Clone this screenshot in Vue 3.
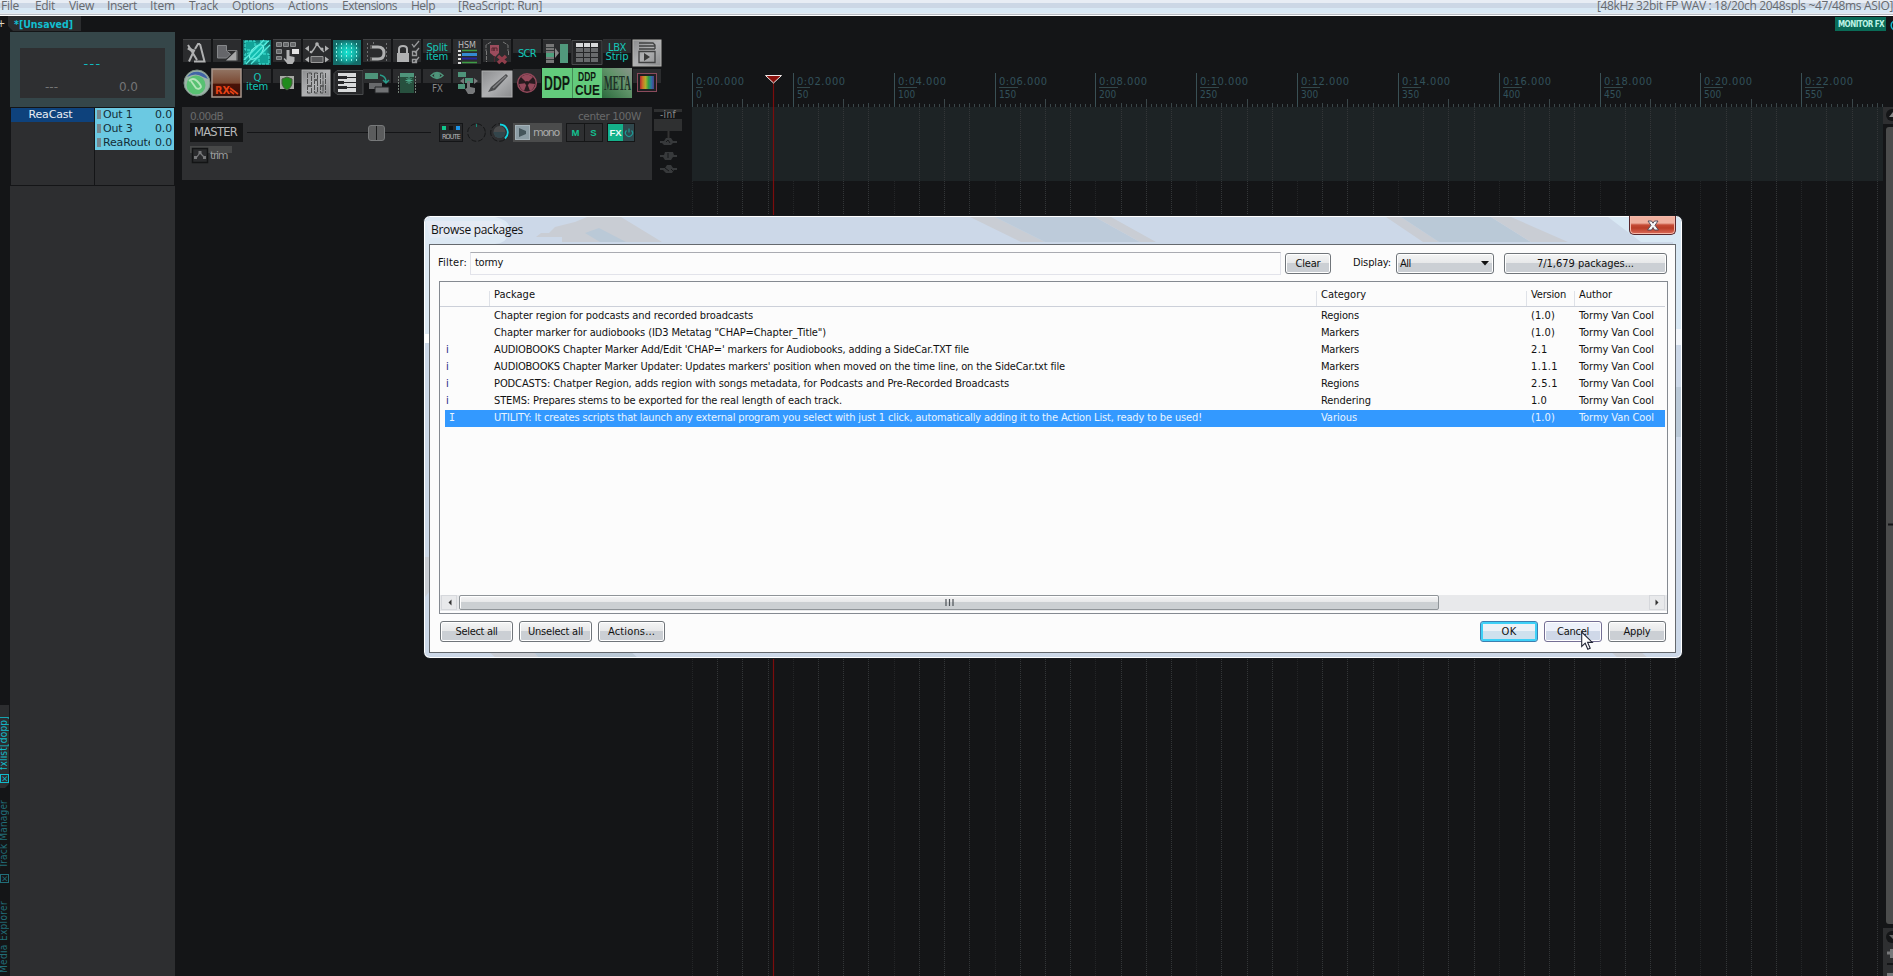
<script setup>
// Spreads a label to a fixed advance width by adjusting its tracking.
const vFit = {
  mounted(el, { value }) {
    if (!value) return
    const box = el.getBoundingClientRect()
    const size = Math.max(box.width, box.height)
    const count = el.textContent.length
    if (count) el.style.letterSpacing = (value - size) / count + 'px'
  },
}

const menus = [
  ['File', 18, 16], ['Edit', 20, 14], ['View', 25, 13], ['Insert', 30, 13], ['Item', 25, 14],
  ['Track', 29, 14], ['Options', 42, 14], ['Actions', 40, 14], ['Extensions', 55, 14], ['Help', 24, 23],
  ['[ReaScript: Run]', 84, 0],
]

const sends = ['Out 1', 'Out 3', 'ReaRoute']

const STEP = 100.84
const majors = Array.from({ length: 12 }, (_, i) => ({
  x: Math.round(i * STEP),
  time: '0:' + String(i * 2).padStart(2, '0') + '.000',
  frame: String(i * 50),
}))
const ticks = []
for (let i = 1; i < 237; i++) {
  const m = i % 20
  if (m === 0) continue
  ticks.push({ x: Math.round((i * STEP) / 20), y: m === 10 ? 26 : m % 5 === 0 ? 30 : 31 })
}
const grid = []
for (let i = 0; i < 48; i++) grid.push({ x: Math.round((i * STEP) / 4), major: i % 4 === 0 })

const rows = [
  ['', 'Chapter region for podcasts and recorded broadcasts', 259, 'Regions', 38, '(1.0)', 24],
  ['', 'Chapter marker for audiobooks (ID3 Metatag "CHAP=Chapter_Title")', 332, 'Markers', 38, '(1.0)', 24],
  ['i', "AUDIOBOOKS Chapter Marker Add/Edit 'CHAP=' markers for Audiobooks, adding a SideCar.TXT file", 475, 'Markers', 38, '2.1', 17],
  ['i', "AUDIOBOOKS Chapter Marker Updater: Updates markers' position when moved on the time line, on the SideCar.txt file", 571, 'Markers', 38, '1.1.1', 27],
  ['i', 'PODCASTS: Chatper Region, adds region with songs metadata, for Podcasts and Pre-Recorded Broadcasts', 515, 'Regions', 38, '2.5.1', 27],
  ['i', 'STEMS: Prepares stems to be exported for the real length of each track.', 348, 'Rendering', 50, '1.0', 16],
  ['I', 'UTILITY: It creates scripts that launch any external program you select with just 1 click, automatically adding it to the Action List, ready to be used!', 708, 'Various', 36, '(1.0)', 24],
]
</script>

<template>
  <div class="screen">
    <header class="menubar">
      <span v-for="m in menus" :key="m[0]" v-fit="m[1]" :style="{ marginRight: m[2] + 'px' }">{{ m[0] }}</span>
      <span v-fit="296" class="audio">[48kHz 32bit FP WAV : 18/20ch 2048spls ~47/48ms ASIO]</span>
    </header>

    <div class="body">
      <aside class="left">
        <div class="projects"><span class="plus">+</span><span class="ptab"><b v-fit="59">*[Unsaved]</b></span></div>
        <div class="dockrow">
          <nav class="rail">
            <div class="vtab on"><span v-fit="54">fxlist[dopp]</span><i>×</i></div>
            <div class="vtab tm"><span v-fit="68">Track Manager</span><i>×</i></div>
            <div class="vtab me"><span v-fit="72">Media Explorer</span></div>
          </nav>
          <div class="dock">
            <div class="transport">
              <div class="display"><span class="t1">---</span><div class="t2"><span>---</span><span>0.0</span></div></div>
            </div>
            <div class="strips">
              <div class="strip"><div class="sname"><span v-fit="44">ReaCast</span></div></div>
              <div class="strip sends">
                <div v-for="s in sends" :key="s" class="send"><i></i><span class="sn">{{ s }}</span><span v-fit="17">0.0</span></div>
              </div>
            </div>
            <div class="empty"></div>
          </div>
        </div>
      </aside>

      <main class="center">
        <div class="toolbar">
          <svg class="cell"><rect class="bt" width="28" height="23" /><path d="M0 .5h28" class="edge" /><path d="M5 6l9 15M6 22.500l5.500-12M17 5l4.500 17.500H11M17 5l-2 0-3 5" fill="none" stroke="#b0b1b2" stroke-width="2" /><path d="M5 9l5 3" stroke="#b0b1b2" stroke-width="3" /></svg>
          <svg class="cell"><rect class="bt" width="28" height="23" /><path d="M0 .5h28" class="edge" /><path d="M4.500 6.500h9V12l4 3-4 4h-9z" fill="#65666a" stroke="#85878a" /><path d="M13 21.500L23.500 11.500v10z" fill="#a6a7a8" /><path d="M14.500 11.500h9.500v10" fill="none" stroke="#7d7e80" /></svg>
          <svg class="cell"><defs><radialGradient id="teal"><stop offset="0" stop-color="#14e6d3" /><stop offset=".6" stop-color="#14aca1" /><stop offset="1" stop-color="#146c69" /></radialGradient></defs><rect y="1" width="28" height="25" fill="url(#teal)" /><path d="M2 2h10v9H2zM17 2h9L15 13M2 25V15l8-2M16 15h10v10H16z" fill="#12a398" stroke="#45e5d6" stroke-dasharray="3 1" /><ellipse cx="13.500" cy="13" rx="9" ry="4.500" transform="rotate(-47 13.500 13)" fill="#13bdb0" stroke="#83f3e7" /><path d="M3 25L25 2M1 21L21 1M8 25L27 6" stroke="#55e9dc" stroke-width="1.300" /></svg>
          <svg class="cell"><rect class="bt" width="28" height="23" /><path d="M0 .5h28" class="edge" /><path d="M3.500 3.500h5v4h-5zM10.500 3.500h5v4h-5zM17.500 3.500h5v4h-5zM3.500 10.500h5v4h-5zM3.500 17.500h5v3h-5z" fill="#66686a" stroke="#8d8f90" /><path d="M19 10h7v5h-7z" fill="#e3e3e3" /><path d="M13.500 11h3v6l5 1v4l-2 3h-5l-4-5 1-1 2 2z" fill="#b1b2b3" /></svg>
          <svg class="cell"><rect class="bt" width="28" height="23" /><path d="M0 .5h28" class="edge" /><path d="M2 9.500l4-3v6zM26 9.500l-4-3v6zM2 20.500l4-3v6zM26 20.500l-4-3v6z" fill="#b0b1b2" /><path d="M8 14l3-4 3-5 4 5 3 3" fill="none" stroke="#b0b1b2" stroke-width="1.400" /><circle cx="8" cy="13" r="1.300" class="ico" /><circle cx="14" cy="5" r="1.800" class="ico" /><circle cx="19" cy="10" r="1.500" class="ico" /><path d="M8 17.500h12v6H8z" fill="#565759" stroke="#999" /></svg>
          <svg class="cell"><rect y="1" width="28" height="25" fill="url(#teal)" /><path d="M3.500 4v20M8.500 4v20M13.500 4v20M18.500 4v20M23.500 4v20" stroke="#8feee4" stroke-dasharray="2 2" /></svg>
          <svg class="cell"><rect class="bt" width="28" height="23" /><path d="M0 .5h28" class="edge" /><path d="M4.500 4v19M23.500 4v19M10.500 3v3" stroke="#707173" stroke-dasharray="2 2" /><path d="M8 8h7q6 0 6 6t-6 6H8" fill="none" stroke="#b0b1b2" stroke-width="3" /><path d="M8 6v4M8 18v4" stroke="#555" stroke-width="2" /></svg>
          <svg class="cell"><rect class="bt" width="28" height="23" /><path d="M0 .5h28" class="edge" /><path d="M4 14h12v9H4z" class="ico" /><path d="M6 14V10q0-3 4-3t4 3v4" fill="none" stroke="#b0b1b2" stroke-width="2" /><path d="M19 5l2 3 5-6M19.500 12.500h4v4h-4zM19.500 20.500h4v3h-4zM26 9l-4 5M26 18l-4 5" fill="none" stroke="#9a9b9d" stroke-width="1.300" /></svg>
          <div class="cell word"><span v-fit="21">Split</span><span v-fit="22">item</span></div>
          <svg class="cell"><rect class="bt" width="28" height="25" /><text x="5" y="9" class="tt" textLength="18">HSM</text><path d="M5 12h3M5 16h3M5 20h3M5 24h3" stroke="#ddd" stroke-width="2" /><path d="M9 11.500h15M9 23.500h15" stroke="#3e9d45" stroke-width="1.500" /><path d="M9 15.500h15" stroke="#348bd2" stroke-width="3" /><path d="M9 19.500h15" stroke="#26269c" stroke-width="2" /></svg>
          <svg class="cell"><rect class="bt" width="28" height="23" /><path d="M0 .5h28" class="edge" /><path d="M8 3L3 6v6M20 3l5 3v6M3.500 12v11M25.500 12v4" fill="none" stroke="#777" stroke-dasharray="4 1" /><path d="M7 6h9v8l-4 4-5-4z" fill="#9c4c5d" /><path d="M9 12V9h2v3V9h3v3M11.500 17v6" fill="none" stroke="#552630" /><path d="M15 17l8 7M23 17l-8 7" stroke="#903e4c" stroke-width="3.500" /></svg>
          <div class="cell word solo"><span v-fit="18">SCR</span></div>
          <svg class="cell"><rect class="bt" width="28" height="14" /><path d="M0 .5h28" class="edge" /><path d="M3 5h8v19H3z" fill="#777" /><path d="M3 8.500h8M3 11.500h8M3 20.500h8" stroke="#34393a" /><path d="M3 14h8v4H3z" fill="#4da07d" /><path d="M12 9l4 5-4 5z" fill="#888" /><path d="M17 5h8v19h-8z" fill="#51997d" /></svg>
          <svg class="cell"><path d="M-1 1.500h30v24H-1z" fill="#242527" stroke="#494b4d" /><path d="M3 4h7v4H3zM11 4h6v4h-6zM18 4h7v4h-7z" fill="#d8dadb" /><path d="M3 9h7v4H3zM11 9h6v4h-6zM18 9h7v4h-7zM3 14h7v4H3zM11 14h6v4h-6zM18 14h7v4h-7zM3 19h7v4H3zM11 19h6v4h-6zM18 19h7v4h-7z" fill="#686a6c" /></svg>
          <div class="cell word"><span v-fit="18">LBX</span><span v-fit="23">Strip</span></div>
          <svg class="cell"><defs><linearGradient id="chrome" x2="1" y2="1"><stop stop-color="#8b8c8e" /><stop offset=".5" stop-color="#b0b1b3" /><stop offset="1" stop-color="#8a8b8d" /></linearGradient></defs><rect y="1" width="28" height="26" fill="url(#chrome)" stroke="#b5b5b2" /><path d="M6 4h14l2 2v4M6 7h16M6 10h16M6 12.500h16v11H6z" fill="none" stroke="#404142" stroke-width="1.300" /><path d="M11 14l6 4-6 4z" fill="#3a3a3a" /></svg>

          <svg class="cell"><circle cx="14" cy="14" r="13" fill="#9cb3a8" stroke="#7c9187" /><path d="M4 8a12 12 0 0 1 21 2l-5-2q-7-5-16 0" fill="#4164a6" /><circle cx="13" cy="16" r="9.500" fill="#58c172" /><path d="M6 12q4-4 8 0t4 6q-2 3-5 1L8 12" fill="none" stroke="#b4e4ba" stroke-width="1.800" /></svg>
          <svg class="cell"><defs><linearGradient id="rx" x2="0" y2="1"><stop stop-color="#927564" /><stop offset=".5" stop-color="#7b4a34" /><stop offset=".55" stop-color="#4a1207" /><stop offset="1" stop-color="#33100a" /></linearGradient></defs><rect x="-1" width="29" height="28" fill="url(#rx)" stroke="#a8978d" stroke-width="1.500" /><text x="2" y="25" class="rx" textLength="15" lengthAdjust="spacingAndGlyphs">RX</text><path d="M17 19l8 6M17 22l4 3" stroke="#e74216" stroke-width="1.600" /></svg>
          <div class="cell word"><span v-fit="8">Q</span><span v-fit="22">item</span></div>
          <svg class="cell"><rect class="bt" width="28" height="14" /><path d="M7 7h14v13H7z" fill="#a7aaa5" /><path d="M9 10l5-2 5 2v5q-1 4-5 6-4-2-5-6z" fill="#208b1c" stroke="#485a42" /></svg>
          <svg class="cell"><rect x="-1" y="1" width="28" height="26" fill="url(#chrome)" stroke="#b0b1b2" /><path d="M4.500 4v20h4V4zM11.500 4v20h3V4zM17.500 4v20h2.500V4zM22.500 4v20" fill="none" stroke="#4b4c4d" stroke-dasharray="5 1" /><path d="M4 17h5M11 11h4M17 17h4" stroke="#5b5c5d" stroke-width="2" /></svg>
          <svg class="cell"><path d="M4 1.500h26v24H4l-3-3v-18z" fill="#27282a" stroke="#494b4d" /><path d="M5 4h18v4H5zM5 9h18v4H5zM5 14h18v4H5zM5 19h18v4H5z" fill="#d8dadb" /><path d="M5 7h9v3H5zM5 12h6v3H5zM5 17h9v3H5z" fill="#27282a" /></svg>
          <svg class="cell"><rect class="bt" width="28" height="14" /><path d="M2 4h13v6H2z" fill="#4e947a" /><path d="M17 6q6 1 6 7M20 11l3 3 3-3" fill="none" stroke="#299d8b" stroke-width="1.500" /><path d="M6 14h13v6H6z" fill="#686a6c" /><path d="M12 18h14v6H12z" fill="#707274" stroke="#232426" /></svg>
          <svg class="cell"><rect class="bt" width="28" height="14" /><path d="M7 4h14v4H7z" fill="#4e947a" /><path d="M7 8h14v16H7z" fill="#27503e" /><path d="M5.500 7v18M22.500 7v18" stroke="#758279" stroke-dasharray="2 1" /><path d="M16 8v7M12.500 11.500h7M13.500 9l5 5M18.500 9l-5 5" stroke="#4fa98a" /></svg>
          <svg class="cell"><rect class="bt" width="28" height="14" /><path d="M8 6.500q6-6 12 0-6 6-12 0z" fill="none" stroke="#4e947a" stroke-width="1.500" /><circle cx="14" cy="6.500" r="3" fill="#4e947a" /><text x="9" y="23" class="fx" textLength="11">FX</text></svg>
          <svg class="cell"><rect class="bt" width="28" height="14" /><path d="M5 3h8v5H5zM5 15h7v5H5zM12 9h8v5h-8z" fill="#4e947a" /><path d="M7 12l4-3v6zM25 12l-4-3v6zM14 12h3v6l5 1v4l-2 2h-5l-3-5 2-1z" fill="#77797b" /></svg>
          <svg class="cell"><rect x="-1" y="2" width="30" height="26" fill="url(#chrome)" stroke="#b0b1b2" /><path d="M5 23l3-5L23 5l2 2-13 14z" fill="#4a4b4d" /><path d="M10 19L23 7" stroke="#808183" stroke-width="1.500" /></svg>
          <svg class="cell"><rect class="bt" width="28" height="14" /><circle cx="14" cy="14" r="9.300" fill="#291b20" stroke="#94495b" stroke-width="1.500" /><path d="M14 14L8 8q6-5 12 0zM14 14l8 1q-1 5-5 7zM14 14l-8 1q1 5 5 7z" fill="#94495b" /><circle cx="14" cy="14" r="2" fill="#22191c" /></svg>
          <svg class="cell"><rect x="-1" y="-1" width="30" height="30" fill="#63cb7c" /><text x="1" y="21" class="ddp" textLength="26" lengthAdjust="spacingAndGlyphs">DDP</text></svg>
          <svg class="cell"><rect x="-1" y="-1" width="30" height="30" fill="#63cb7c" /><path d="M-.5-1v30" stroke="#458b56" /><text x="5" y="12" class="ddp small" textLength="18" lengthAdjust="spacingAndGlyphs">DDP</text><text x="2" y="26" class="ddp cue" textLength="25" lengthAdjust="spacingAndGlyphs">CUE</text></svg>
          <svg class="cell"><defs><linearGradient id="meta" x1="1" x2="0" y2="1"><stop stop-color="#8a938b" /><stop offset=".45" stop-color="#5f9368" /><stop offset="1" stop-color="#2b6a3d" /></linearGradient></defs><rect x="-1" y="-1" width="30" height="30" fill="url(#meta)" /><text x="1" y="21" class="meta" textLength="27" lengthAdjust="spacingAndGlyphs">META</text></svg>
          <svg class="cell"><defs><linearGradient id="rainbow"><stop stop-color="#ad2630" /><stop offset=".2" stop-color="#ce7227" /><stop offset=".4" stop-color="#aeae2b" /><stop offset=".6" stop-color="#339e46" /><stop offset=".8" stop-color="#2877a2" /><stop offset="1" stop-color="#503c8b" /></linearGradient></defs><rect class="bt" width="28" height="14" /><rect x="4.500" y="4.500" width="19" height="18" fill="#202023" stroke="#8b4b5c" /><rect x="7" y="7" width="14" height="13" fill="url(#rainbow)" /></svg>
        </div>

        <div class="mixrow">
          <section class="master">
            <div class="mtop"><span v-fit="33">0.00dB</span><span v-fit="63">center 100W</span></div>
            <div class="mctl">
              <div class="mname"><span v-fit="43">MASTER</span></div>
              <div class="fader"><i></i></div>
              <div class="route"><div><i class="g"></i><i class="k"></i><i class="b"></i></div><span v-fit="18">ROUTE</span></div>
              <svg class="knobs"><circle cx="9.500" cy="9.500" r="8.800" fill="none" stroke="#151617" stroke-dasharray="5 2" /><path d="M9.500 1v3" stroke="#128c76" /><circle cx="32.500" cy="9.500" r="8.800" fill="none" stroke="#151617" stroke-dasharray="6 2" /><circle cx="32.500" cy="9" r="6" fill="#4a4b4c" /><path d="M26.500 9a6 6 0 0 0 12 0z" fill="#33454b" /><path d="M33 1.500a8 8 0 0 1 5 14" fill="none" stroke="#12d6e2" stroke-width="1.800" /></svg>
              <div class="mono"><svg><rect x=".5" y=".5" width="14" height="14" fill="#8c9da5" stroke="#a4b2b9" /><path d="M4 3l7 3v3l-7 3z" fill="#44555b" /></svg><span v-fit="26">mono</span></div>
              <div class="ms"><b>M</b><b>S</b></div>
              <div class="fxb"><b>FX</b><svg><path d="M3.500 4.500a3.500 3.500 0 1 0 5 0M6 2.500v4" fill="none" stroke="#1d9b96" stroke-width="1.200" /></svg></div>
            </div>
            <div class="trim"><svg><rect x="2.500" y="2.500" width="15" height="14" fill="#2a2b2d" stroke="#131415" stroke-width="1.500" /><path d="M6 12l4-5 5 5" fill="none" stroke="#77787a" stroke-width="1.200" /><path d="M4 10h3v3H4zM8.500 5h3v3h-3zM13 10h3v3h-3z" fill="#77787a" /></svg><span v-fit="17">trim</span></div>
          </section>
          <section class="meter">
            <i></i><span v-fit="16">-inf</span><i class="clip"></i>
            <svg><path d="M14.500 0v7" stroke="#333" stroke-width="2" /><path d="M6 10h4l2-3h5l2 3h4v2h-4l-2 2H10l-2-2H6zM6 24h4l1-3h8l1 3h3v2h-4l-2 3h-6l-2-3H6zM6 37h5l2-3h4l2 3h4v2h-3l-2 3h-6l-3-3H6z" fill="#37393b" /><path d="M12 11l2-2 2 3M14 22v5M11 37l4 3M17 38l2 2" stroke="#17181a" fill="none" /></svg>
          </section>
        </div>
      </main>

      <section class="timeline">
        <div class="monrow"><span class="monitor"><b v-fit="46">MONITOR FX</b></span><svg><path d="M8 4a5 5 0 0 0 0 9" fill="none" stroke="#11b9cc" stroke-width="1.500" /></svg></div>
        <div class="arrange">
          <svg class="ruler" width="1191" height="903">
            <rect y="34" width="1191" height="74" fill="#1d2325" />
            <path v-for="g in grid" :key="g.x" :d="`M${g.x + 0.5} ${g.major ? 108 : 34}V903`" :stroke="g.major ? '#242628' : '#333638'" stroke-dasharray="1 1" />
            <path v-for="t in ticks" :key="t.x" :d="`M${t.x + 0.5} ${t.y}V34`" stroke="#3a4649" />
            <g v-for="m in majors" :key="m.x">
              <path :d="`M${m.x + 0.5} 0V34`" stroke="#3a5055" />
              <text :x="m.x + 4" y="12" class="rt" textLength="48">{{ m.time }}</text>
              <path :d="`M${m.x + 4} 14.500h${m.frame.length * 6 + 1}`" stroke="#31474b" />
              <text :x="m.x + 4" y="25" class="rf">{{ m.frame }}</text>
            </g>
            <path d="M81.500 10V903" stroke="#7b0d0d" stroke-width="1.200" />
            <path d="M73.500 2.500h16l-8 7.500z" fill="#8b100c" stroke="#f0e8e8" />
          </svg>
          <svg class="vscroll" width="10" height="903">
            <path d="M0 34h10v17H0zM0 855h10v48H0z" fill="#2e2f31" />
            <circle cx="9" cy="42" r="6" fill="#141517" /><path d="M6 44l4-5v5z" fill="#888" />
            <path d="M10 54H6q-3 0-3 3v791q0 3 3 3h4z" fill="#4b4c4c" /><path d="M5 451.500h5" stroke="#141517" stroke-width="2" />
            <circle cx="9" cy="864" r="6" fill="#141517" /><path d="M6 862h4v4z" fill="#666" />
            <path d="M4 880h6M8.500 876v9M4 901.500h6" stroke="#77787a" stroke-width="3" /><path d="M4 891h6" stroke="#141517" stroke-width="2" />
          </svg>
        </div>
      </section>
    </div>

    <div class="dialog">
      <svg class="glass" width="1256" height="440">
        <path d="M0 0h70q18 4 14 16-2 10-14 11H8v90l-8 0z" fill="#dce8f3" />
        <path d="M1 4h74q10 8 0 14L5 21z" fill="#e4eaf4" />
        <path d="M162 0h34l41 25H137v-5h-26l5-4h8l6-6 20-5z" fill="#c9cdd4" /><path d="M160 16l14-5 27 14h-26z" fill="#bac9d7" />
        <path d="M545 0h25l50 25h-24z" fill="#c9cdd4" /><path d="M570 0h100l45 25h-95z" fill="#bdcbda" /><path d="M670 0h16l45 25h-16z" fill="#c9cdd4" />
        <path d="M961 0h15l38 25h-16z" fill="#c9cdd4" /><path d="M976 0h90l40 25h-92z" fill="#bac9d7" /><path d="M1066 0h20l57 25h-37z" fill="#c9cdd4" />
        <path d="M1183 0h73v125h-8V25h-32z" fill="#d8e8f4" />
        <path d="M0 126h8v-9H0z" fill="#fff" /><path d="M1248 112h8v16h-8z" fill="#f1f5fa" /><path d="M1248 170h8v50h-8z" fill="#bac9d7" />
        <path d="M0 340h8v30l-8 10z" fill="#c9cdd4" /><path d="M63 434h45l6 7H71z" fill="#c9cdd4" /><path d="M108 434h97l8 7h-99z" fill="#bac9d7" /><path d="M1185 434h30l8 7h-30z" fill="#c9cdd4" />
      </svg>
      <div class="title"><span v-fit="92">Browse packages</span>
        <div class="close"><svg width="12" height="11"><path d="M1 1h3.500L6 3.200 7.500 1H11L8 5.300 11.500 10h-4L6 7.500 4.500 10h-4L4 5.300z" fill="#f7f7f7" stroke="#4b4453" stroke-width=".9" /></svg></div>
      </div>
      <div class="client">
        <div class="filter">
          <label v-fit="29">Filter:</label>
          <div class="field"><span v-fit="28">tormy</span></div>
          <button class="clear"><span v-fit="25">Clear</span></button>
          <label v-fit="38" class="dl">Display:</label>
          <button class="select"><span>All</span><svg width="8" height="5"><path d="M0 0h8L4 4.500z" fill="#111" /></svg></button>
          <button class="count"><span v-fit="97">7/1,679 packages...</span></button>
        </div>
        <div class="table">
          <div class="tr th"><span></span><span><b v-fit="41">Package</b></span><span><b v-fit="45">Category</b></span><span><b v-fit="35">Version</b></span><span><b v-fit="33">Author</b></span></div>
          <div class="rows">
            <div v-for="(r, i) in rows" :key="i" class="tr" :class="{ sel: i === 6 }">
              <span class="flag">{{ r[0] }}</span><span><b v-fit="r[2]">{{ r[1] }}</b></span><span><b v-fit="r[4]">{{ r[3] }}</b></span><span><b v-fit="r[6]">{{ r[5] }}</b></span><span><b v-fit="75">Tormy Van Cool</b></span>
            </div>
          </div>
          <div class="hscroll">
            <div class="arrow"><svg width="5" height="7"><path d="M4.500 .5v6L1.500 3.500z" fill="#333" /></svg></div>
            <div class="thumb"><svg width="9" height="7"><path d="M1 0v7M4.500 0v7M8 0v7" stroke="#4d5257" stroke-width="1.200" /></svg></div>
            <div class="arrow r"><svg width="5" height="7"><path d="M.5 .5v6l3-3z" fill="#333" /></svg></div>
          </div>
        </div>
        <div class="actions">
          <button class="w73"><span v-fit="42">Select all</span></button><button class="w73"><span v-fit="55">Unselect all</span></button><button class="w66"><span v-fit="47">Actions...</span></button>
          <i></i>
          <button class="w58 ok"><span v-fit="15">OK</span></button><button class="w58 hot"><span v-fit="32">Cancel</span></button><button class="w58"><span v-fit="27">Apply</span></button>
        </div>
      </div>
      <svg class="cursor" width="13" height="20"><path d="M.7 1v14.500l3.500-3.300 2.600 6 2.400-1-2.600-5.800h4.700z" fill="#fff" stroke="#222535" stroke-width="1.100" /></svg>
    </div>
  </div>
</template>

<style>
html, body { background: #141517; overflow: hidden; }
</style>

<style scoped>
* { box-sizing: border-box; }
.screen { position: relative; width: 1893px; height: 976px; overflow: hidden; background: #141517; color: #9a9b9c; font-family: 'DejaVu Sans Condensed', 'DejaVu Sans', sans-serif; font-size: 11px; white-space: nowrap; }
span, b, label { display: inline-block; font-weight: 400; }
svg { display: block; flex: none; overflow: visible; }
.menubar { height: 16px; display: flex; padding-left: 1px; color: #66696e; font: 12px/13px 'Open Sans', 'Noto Sans', sans-serif; background: linear-gradient(#e8edf4 0 3px, #ccd7e5 3px 8px, #d8e8f4 8px 13px, #e4e9ef 13px 14px, #b6bbc2 14px 15px, #fff 15px); }
.menubar span { line-height: 12px; height: 13px; }
.audio { margin-left: auto; }
.body { display: flex; height: 960px; }
.left { width: 182px; flex: none; display: flex; flex-direction: column; }
.projects { height: 16px; display: flex; line-height: 15px; }
.plus { width: 8px; color: #e0d8c0; margin-left: -3px; margin-right: 3px; }
.ptab { width: 73px; height: 15px; padding-left: 6px; background: #2b2c2e; clip-path: polygon(0 0, 100% 0, 100% 100%, 5px 100%, 0 10px); }
.ptab b { color: #12bfd0; font: bold 10.500px/16px 'DejaVu Sans Condensed', sans-serif; }
.dockrow { display: flex; flex: 1; min-height: 0; }
.rail { width: 10px; padding-top: 673px; color: #216d78; }
.vtab { width: 9px; display: flex; flex-direction: column; align-items: center; line-height: 9px; }
.vtab span { writing-mode: vertical-rl; transform: rotate(180deg); font-size: 10px; line-height: 10px; width: 10px; margin-left: -2px; }
.vtab i { width: 9px; height: 9px; margin: 4px 0 0 -1px; border: 1px solid; font: 9px/6px 'DejaVu Sans', sans-serif; transform: rotate(90deg); text-align: center; }
.on { height: 83px; padding-top: 11px; color: #12b9ca; background: #2c2d2f; clip-path: polygon(0 0, 100% 0, 100% 79px, 5px 100%, 0 100%); }
.tm { margin-top: 12px; height: 84px; }
.tm i { margin-top: 6px; }
.me { margin-top: 17px; }
.dock { width: 165px; display: flex; flex-direction: column; }
.transport { height: 75px; padding: 16px 10px 9px; background: #354649; }
.display { height: 50px; background: #2e2f31; display: flex; flex-direction: column; font: 12px/14px 'DejaVu Sans', sans-serif; }
.t1 { color: #10bcc0; align-self: center; padding-top: 9px; font-size: 13px; letter-spacing: 1.300px; height: 32px; }
.t2 { display: flex; justify-content: space-between; padding: 0 27px 0 25px; color: #747576; }
.strips { height: 79px; display: flex; padding: 1px 1px 1px; gap: 1px; }
.strip { width: 83px; background: #2d2e30; }
.sends { width: 79px; }
.sname { height: 14px; background: #0e427c; color: #e9eef4; text-align: center; font: 11px/13px 'DejaVu Sans', sans-serif; padding-right: 4px; }
.send { height: 14px; background: #6bc9e2; color: #132e38; display: flex; align-items: center; padding: 0 2px 1px; font: 11px/13px 'DejaVu Sans', sans-serif; }
.send i { width: 4px; height: 9px; background: #75868e; margin-right: 2px; }
.send .sn { width: 47px; overflow: hidden; margin-right: 5px; letter-spacing: -.15px; }
.empty { flex: 1; background: #2d2e30; }
.center { width: 510px; flex: none; padding-top: 23px; }
.toolbar { display: grid; grid-template-columns: repeat(16, 30px); grid-auto-rows: 30px; margin-left: 1px; height: 68px; }
.cell { width: 30px; height: 30px; }
.bt { fill: #2b2c2e; }
.edge { stroke: #414244; }
.ico { fill: #b0b1b2; }
.word { width: 28px; height: 23px; display: flex; flex-direction: column; align-items: center; padding-top: 4px; color: #14c6b7; font: 10px/9px 'DejaVu Sans', sans-serif; background: linear-gradient(#343537, #2b2c2e 1px 14px, transparent 14px); }
.solo { padding-top: 10px; }
.tt { font: 8px 'DejaVu Sans', sans-serif; fill: #bbb; }
.fx { font: 10px 'DejaVu Sans Condensed', sans-serif; fill: #858687; }
.rx { font: bold 10px 'DejaVu Sans', sans-serif; fill: #e74216; }
.ddp { font: bold 20px 'Liberation Sans', sans-serif; fill: #101c12; }
.small { font-size: 13px; }
.cue { font-size: 14px; font-weight: 900; }
.meta { font: bold 20px 'Liberation Serif', serif; fill: #203127; }
.mixrow { display: flex; }
.master { width: 470px; height: 73px; background: #2e2f31; padding: 3px 0 0 8px; }
.mtop { display: flex; justify-content: space-between; padding-right: 11px; height: 13px; color: #696a6b; font: 10.500px/13px 'DejaVu Sans', sans-serif; }
.mctl { display: flex; height: 19px; }
.mname { width: 53px; background: #151617; padding-left: 4px; font: 11.500px/18px 'DejaVu Sans', sans-serif; color: #b7b8b9; }
.fader { width: 184px; margin-left: 4px; background: linear-gradient(#141517, #141517) 0 9px / 100% 1px no-repeat; display: flex; }
.fader i { width: 17px; height: 16px; margin: 2px 0 0 121px; border-radius: 3px; border: 1px solid #77797a; background: linear-gradient(90deg, #5b5c5d 7px, #1b1c1d 7px 8px, #5b5c5d 8px); }
.route { width: 24px; margin-left: 8px; border: 1px solid #141517; background: #27282a; font: 7px/8px 'DejaVu Sans Condensed', sans-serif; color: #bbb; padding: 2px; }
.route div { display: flex; gap: 3px; height: 7px; }
.route i { width: 4px; height: 4px; }
.g { background: #11c58d; } .k { background: #111; } .b { background: #1d94e8; }
.knobs { width: 44px; height: 19px; margin-left: 4px; }
.mono { width: 49px; margin-left: 2px; background: #4b4c4c; display: flex; padding: 2px; font: 11px/15px 'DejaVu Sans', sans-serif; color: #a9aaaa; }
.mono svg { width: 15px; height: 15px; margin-right: 3px; }
.ms { display: flex; width: 37px; margin-left: 4px; border: 1px solid #151617; }
.ms b { flex: 1; text-align: center; font: bold 9.500px/17px 'Liberation Sans', sans-serif; color: #13c292; }
.ms b + b { border-left: 1px solid #151617; }
.fxb { width: 28px; margin-left: 4px; border: 1px solid #151617; background: #30484d; display: flex; }
.fxb b { width: 15px; background: #14b18a; color: #edfaf6; font: bold 9.500px/18px 'Liberation Sans', sans-serif; text-align: center; }
.fxb svg { width: 11px; height: 12px; margin-top: 2px; }
.trim { display: flex; width: 42px; height: 19px; margin-top: 4px; background: linear-gradient(#474848 7px, transparent 7px); font: 11px/20px 'DejaVu Sans', sans-serif; color: #9a9b9b; }
.trim svg { width: 19px; height: 18px; margin-right: 1px; }
.meter { width: 28px; margin-left: 2px; padding-top: 2px; display: flex; flex-direction: column; align-items: center; color: #8a8b8c; line-height: 8px; font-size: 10px; }
.meter i { width: 28px; height: 3px; background: #2f3031; }
.meter .clip { height: 12px; }
.meter span { height: 7px; line-height: 5px; }
.meter svg { width: 28px; height: 46px; }
.timeline { width: 1201px; flex: none; }
.monrow { height: 57px; display: flex; padding: 1px 0 0 1143px; }
.monitor { width: 51px; height: 14px; background: #0a6b57; padding-left: 3px; }
.monitor b { color: #bdf3e5; font: bold 8px/14px 'DejaVu Sans Condensed', sans-serif; }
.monrow svg { width: 7px; height: 15px; }
.arrange { display: flex; }
.rt { font: 11px 'DejaVu Sans Condensed', sans-serif; fill: #32515a; }
.rf { font: 10px 'DejaVu Sans Condensed', sans-serif; fill: #32515a; }
.dialog { position: absolute; left: 423px; top: 215px; width: 1260px; height: 444px; border: 1px solid #171a1e; border-radius: 7px; background: #ccd8e8; color: #111; box-shadow: inset 0 0 0 1px #fff; padding: 0 6px 0 5px; }
.glass { position: absolute; left: 1px; top: 1px; overflow: hidden; border-radius: 6px; }
.title { position: relative; height: 28px; display: flex; padding-left: 2px; font: 12px/27px 'Open Sans', sans-serif; }
.close { margin-left: auto; width: 47px; height: 19px; border: 1px solid #57262b; border-top: 0; border-radius: 0 0 5px 5px; box-shadow: inset 0 0 0 1px #f4b8a9; background: linear-gradient(#f0b09f 0 7px, #c44a35 9px, #b93c26 12px, #dc6d5c); display: flex; align-items: center; justify-content: center; }
.client { position: relative; height: 409px; border: 1px solid #65696e; background: #fcfcfc; padding: 7px 7px 0 9px; }
.filter { display: flex; height: 29px; align-items: flex-start; line-height: 21px; margin-left: -1px; }
.filter > label { line-height: 22px; }
.field { width: 811px; height: 23px; margin-left: 3px; border: 1px solid #e2e3ea; border-top-color: #a9abb1; padding-left: 4px; line-height: 20px; }
button { font: inherit; color: #111; height: 21px; padding: 0; display: flex; align-items: center; justify-content: center; border: 1px solid #70757a; border-radius: 3px; box-shadow: inset 0 0 0 1px #fff; background: linear-gradient(#f4f5f5, #e7e8e9 48%, #cbcfd4 50%, #cbcfd4); }
.filter button { margin-top: 1px; }
.clear { width: 46px; margin-left: 4px; }
.dl { margin-left: 22px; }
.select { width: 98px; margin-left: 5px; padding: 0 4px 0 3px; justify-content: space-between; letter-spacing: -.5px; }
.count { width: 163px; margin-left: 10px; }
.table { width: 1229px; height: 333px; border: 1px solid #858a91; display: flex; flex-direction: column; }
.tr { display: grid; grid-template-columns: 49px 827px 210px 48px 87px; height: 17px; line-height: 16px; }
.tr > span { padding-left: 5px; }
.th { height: 25px; margin: 0 2px 0 0; line-height: 26px; border-bottom: 1px solid #ccd0d9; }
.th > span + span { background: linear-gradient(#dfe2e8, #dfe2e8) 0 9px / 1px 15px no-repeat; }
.rows { flex: 1; padding: 1px 2px 0 5px; }
.rows .tr { grid-template-columns: 44px 827px 210px 48px 81px; width: 1220px; }
.tr .flag { padding-left: 1px; color: #22227c; }
.sel { background: #3399ff; color: #e9f4ff; }
.sel .flag { padding-left: 4px; color: #e9f4ff; font-family: 'DejaVu Sans Mono', monospace; font-size: 10px; }
.hscroll { height: 17px; display: flex; padding: 0 1px 1px; background: #e8e9eb; border-bottom: 1px solid #fff; margin-bottom: 1px; }
.arrow { width: 16px; border: 1px solid #d6d8dc; display: flex; align-items: center; justify-content: center; }
.arrow.r { margin-left: auto; margin-right: 1px; }
.thumb { width: 980px; margin-left: 2px; border: 1px solid #8f9498; border-radius: 2px; box-shadow: inset 1px 1px #fff; background: linear-gradient(#f5f5f6, #e7e8e9 46%, #cbcfd2 50%, #cbcfd2); display: flex; align-items: center; justify-content: center; }
.actions { display: flex; gap: 6px; padding: 7px 2px 0 1px; }
.actions i { flex: 1; }
.w73 { width: 73px; } .w66 { width: 67px; } .w58 { width: 58px; }
.ok { border-color: #3c7fb1; box-shadow: inset 0 0 0 2px #3ed1f7; background: linear-gradient(#edf2f7 48%, #cfe1ee 50%); }
.hot { border-color: #746f94; background: linear-gradient(#edf1fa 48%, #cfd8e8 50%); }
.cursor { position: absolute; left: 1157px; top: 415px; }
</style>
